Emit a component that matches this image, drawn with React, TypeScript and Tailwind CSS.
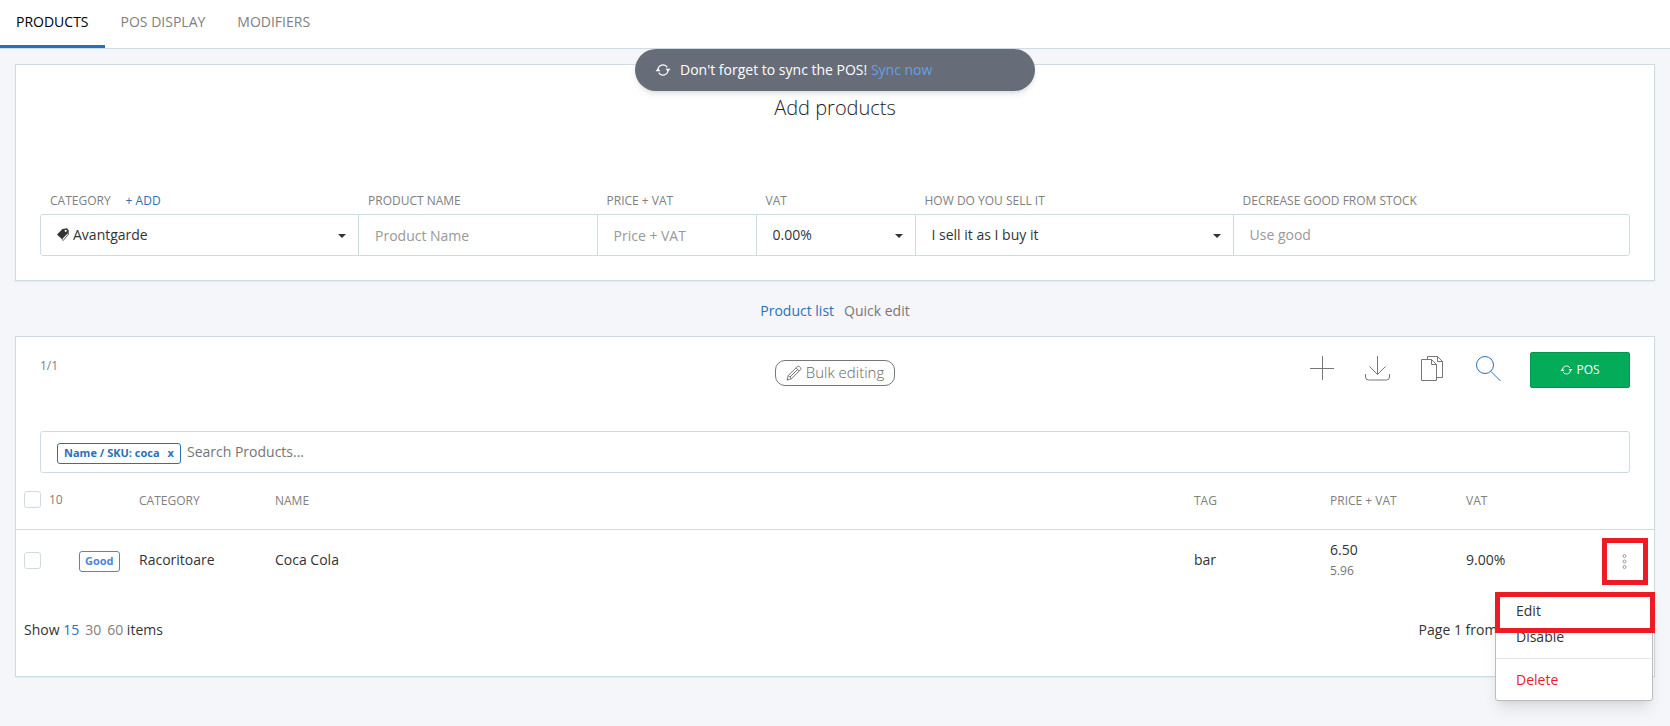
import { useState } from 'react'

function SyncIcon({ className }: { className?: string }) {
  return (
    <svg viewBox="0 0 16 12" fill="none" stroke="currentColor" strokeWidth="1.1" className={className} aria-hidden="true">
      <path d="M3 6a5 5 0 0 1 9.3-2.6M13 6a5 5 0 0 1-9.3 2.6" />
      <path d="M.5 7.2h5L3 4.2zM15.500 4.800h-5L13 7.800z" fill="currentColor" stroke="none" />
    </svg>
  )
}

function TagIcon({ className }: { className?: string }) {
  return (
    <svg viewBox="0 0 12 13" className={className} aria-hidden="true">
      <path d="M5.500 1 10 .2l1 1-.2 4.100L5 11.200 0 6.500z" fill="#333" />
      <circle cx="8.700" cy="2.800" r="1.100" fill="#fff" />
      <path d="M11.600 2v4L6.300 12.400 5 11.500" fill="none" stroke="#333" strokeWidth=".8" />
    </svg>
  )
}

function PencilIcon({ className }: { className?: string }) {
  return (
    <svg viewBox="0 0 16 16" fill="none" stroke="currentColor" strokeWidth=".9" className={className} aria-hidden="true">
      <path d="M1 15 2.300 10.500 11.300 1.500a1.500 1.500 0 0 1 2 0L14.500 2.700a1.500 1.500 0 0 1 0 2L5.500 13.700zM2.300 10.500l3.200 3.200M10 2.800l3.200 3.200M4 12 11.600 4.400" />
    </svg>
  )
}

function Caret() {
  return (
    <svg viewBox="0 0 8 4" className="pointer-events-none absolute right-3 top-[19px] h-1 w-2" aria-hidden="true">
      <path d="M0 0h8L4 4z" fill="#333" />
    </svg>
  )
}

const fieldClass = 'h-10 w-full bg-white px-4 text-sm text-[#333] outline-none placeholder:text-[#999]'
const cellClass = 'relative border-l border-[#cfdbe2]'
const labelClass = 'px-2.5 text-xs text-[#808080]'
const checkboxClass = 'block size-[17px] appearance-none rounded-[3px] border border-[#cfdbe2] bg-white checked:bg-[#2c70b7]'

const tools = [
  {
    name: 'Add',
    color: 'text-[#777]',
    path: 'M12.500 0v24M0 12.500h24',
  },
  {
    name: 'Download',
    color: 'text-[#777]',
    path: 'M12.500 0v18M4.500 10.500l8 8 8-8M.5 18v3a3 3 0 0 0 3 3h18a3 3 0 0 0 3-3v-3',
  },
  {
    name: 'Copy',
    color: 'text-[#777]',
    path: 'M1.500 3.500h10l5 5v16h-15zM11.500 3.500v5h5M7.500 3.500v-3h10l5 5v16h-6M17.500.5v5h5',
  },
  {
    name: 'Search',
    color: 'text-[#2c70b7]',
    path: 'M18.500 9a8.500 8.500 0 1 1-17 0a8.500 8.500 0 0 1 17 0M16 15.500 25.500 25',
  },
]

function AddProducts() {
  return (
    <section className="mx-[15px] mt-[15px] border border-[#cfdbe2] bg-white px-6 pb-6 shadow-xs">
      <h1 className="pt-[29px] text-center text-xl font-light leading-7 text-[#222]">Add products</h1>
      <form className="mt-[71px] grid grid-cols-[20fr_15fr_10fr_10fr_20fr_25fr] gap-y-[5px]" onSubmit={(e) => e.preventDefault()}>
        <div className={labelClass}>
          <label htmlFor="category">CATEGORY</label>
          <a href="#add-category" className="ml-[15px] text-[#2c70b7]">+ ADD</a>
        </div>
        <label htmlFor="product-name" className={labelClass}>PRODUCT NAME</label>
        <label htmlFor="price" className={labelClass}>PRICE + VAT</label>
        <label htmlFor="vat" className={labelClass}>VAT</label>
        <label htmlFor="sell" className={labelClass}>HOW DO YOU SELL IT</label>
        <label htmlFor="stock" className={labelClass}>DECREASE GOOD FROM STOCK</label>
        <div className="col-span-6 grid grid-cols-subgrid rounded-[3px] border border-[#cfdbe2]">
          <div className="relative">
            <TagIcon className="pointer-events-none absolute left-4 top-[13px] h-[13px] w-3" />
            <select id="category" className="h-10 w-full appearance-none rounded-[3px] bg-white pl-8 pr-6 text-sm text-[#333] outline-none">
              <option>Avantgarde</option>
            </select>
            <Caret />
          </div>
          <div className={cellClass}>
            <input id="product-name" placeholder="Product Name" className={fieldClass} />
          </div>
          <div className={cellClass}>
            <input id="price" placeholder="Price + VAT" className={fieldClass} />
          </div>
          <div className={cellClass}>
            <select id="vat" className={`${fieldClass} appearance-none`}>
              <option>0.00%</option>
            </select>
            <Caret />
          </div>
          <div className={cellClass}>
            <select id="sell" className={`${fieldClass} appearance-none`}>
              <option>I sell it as I buy it</option>
            </select>
            <Caret />
          </div>
          <div className={cellClass}>
            <input id="stock" placeholder="Use good" className={`${fieldClass} rounded-[3px] pb-0.5`} />
          </div>
        </div>
      </form>
    </section>
  )
}

function RowMenu() {
  return (
    <div className="absolute -right-px top-[62px] z-10 w-40">
      <ul className="mr-0.5 rounded-b-[3px] border border-[#b9bdc1] bg-white pb-1.5 pt-[5px] text-sm text-[#333] shadow-lg">
        <li><button className="block h-[26px] w-full px-5 text-left">Edit</button></li>
        <li><button className="block h-[26px] w-full px-5 text-left">Disable</button></li>
        <li className="mt-2 border-t border-[#e5e5e5] pt-2">
          <button className="block h-[27px] w-full px-5 text-left text-[#ed1c24]">Delete</button>
        </li>
      </ul>
      <div className="pointer-events-none absolute inset-x-0 top-0 h-[41px] border-[5px] border-[#ed1c24]" />
    </div>
  )
}

function ProductList() {
  const [query, setQuery] = useState('')

  return (
    <section className="mx-[15px] border border-[#cfdbe2] bg-white shadow-xs">
      <div className="grid grid-cols-3 items-start px-6 pt-[15px]">
        <span className="pt-1.5 text-xs text-[#808080]">1/1</span>
        <button className="mt-2 flex h-[26px] items-center gap-1 justify-self-center rounded-[10px] border border-[#777] px-2.5 text-[15px] font-light text-[#666]">
          <PencilIcon className="size-4" />
          Bulk editing
        </button>
        <div className="flex items-center justify-end">
          <div className="mr-[29px] flex gap-[29px] pb-0.5">
            {tools.map((tool) => (
              <button key={tool.name} aria-label={tool.name} className={tool.color}>
                <svg viewBox="0 0 26 26" fill="none" stroke="currentColor" className="size-[26px]">
                  <path d={tool.path} />
                </svg>
              </button>
            ))}
          </div>
          <button className="flex h-9 w-[100px] items-center justify-center gap-[3px] rounded-[2px] border border-[#00964d] bg-[#04ab59] text-xs text-white">
            <SyncIcon className="h-[10px] w-[13px]" />
            POS
          </button>
        </div>
      </div>

      <div className="mx-6 mt-[43px] flex h-[42px] items-center gap-1.5 rounded-[3px] border border-[#cfdbe2] px-4">
        <span className="mt-0.5 flex h-[21px] items-center gap-2 whitespace-nowrap rounded-[3px] border border-[#2c70b7] px-1.5 text-[11px] font-bold text-[#2c70b7]">
          Name / SKU: coca
          <button aria-label="Remove filter">x</button>
        </span>
        <input
          aria-label="Search products"
          value={query}
          onChange={(e) => setQuery(e.target.value)}
          placeholder="Search Products..."
          className="min-w-0 flex-1 text-sm outline-none placeholder:text-[#757575]"
        />
      </div>

      <table className="w-full table-fixed text-left text-sm text-[#333]">
        <thead className="text-xs text-[#808080]">
          <tr className="h-14 border-b border-[#cfdbe2]">
            <th className="w-[115px] pb-0.5 pl-2 font-normal">
              <label className="flex items-center gap-2">
                <input type="checkbox" className={checkboxClass} />
                10
              </label>
            </th>
            <th className="w-[136px] px-2 font-normal">CATEGORY</th>
            <th className="px-2 font-normal">NAME</th>
            <th className="w-[136px] px-2 font-normal">TAG</th>
            <th className="w-[136px] px-2 font-normal">PRICE + VAT</th>
            <th className="w-[136px] px-2 font-normal">VAT</th>
            <th className="w-[60px]" aria-label="Actions" />
          </tr>
        </thead>
        <tbody>
          <tr className="h-[62px]">
            <td className="pl-2">
              <div className="flex items-center gap-[38px]">
                <input type="checkbox" aria-label="Select Coca Cola" className={checkboxClass} />
                <span className="mt-0.5 flex h-[21px] items-center rounded-[3px] border border-[#4a86d8] px-[5px] text-[11px] font-bold text-[#4a86d8]">
                  Good
                </span>
              </div>
            </td>
            <td className="px-2">Racoritoare</td>
            <td className="px-2">Coca Cola</td>
            <td className="px-2">bar</td>
            <td className="px-2">
              <div className="leading-[22px]">6.50</div>
              <div className="text-xs leading-[20px] text-[#777]">5.96</div>
            </td>
            <td className="px-2">9.00%</td>
            <td className="relative pt-[3px]">
              <button aria-label="Row actions" className="ml-2 flex h-[47px] w-[46px] items-center justify-center border-[5px] border-[#ed1c24] pr-0.5">
                <svg viewBox="0 0 5 15" fill="none" stroke="#999" className="h-[15px] w-[5px]">
                  <circle cx="2.500" cy="2" r="1.500" />
                  <circle cx="2.500" cy="7.500" r="1.500" />
                  <circle cx="2.500" cy="13" r="1.500" />
                </svg>
              </button>
              <RowMenu />
            </td>
          </tr>
        </tbody>
      </table>

      <div className="flex justify-between px-2 pb-9 pt-[29px] text-sm text-[#333]">
        <div>
          Show <a href="#15" className="text-[#2c70b7]">15</a>
          <a href="#30" className="mx-1.5 text-[#808080]">30</a>
          <a href="#60" className="text-[#808080]">60</a> items
        </div>
        <div className="pr-[137px]">Page 1 from 1</div>
      </div>
    </section>
  )
}

export default function App() {
  return (
    <div className="relative min-h-screen bg-[#f5f6fa] font-['Open_Sans',sans-serif] text-sm">
      <nav className="flex h-[49px] border-b border-[#cfdbe2] bg-white text-sm text-[#808080]">
        <a href="#products" className="border-b-[3px] border-[#2c70b7] px-4 pt-3 text-black">PRODUCTS</a>
        <a href="#pos-display" className="px-4 pt-3">POS DISPLAY</a>
        <a href="#modifiers" className="px-4 pt-3">MODIFIERS</a>
      </nav>

      <div className="absolute inset-x-0 top-[49px] z-10 mx-auto flex h-[42px] w-[400px] items-center rounded-[21px] bg-[#666d78] px-5 text-white shadow-md">
        <SyncIcon className="mr-[9px] h-3 w-4" />
        <span>
          Don't forget to sync the POS! <a href="#sync" className="text-[#65a0e4]">Sync now</a>
        </span>
      </div>

      <AddProducts />

      <div className="flex h-[55px] items-center justify-center gap-2.5 pt-1">
        <a href="#list" className="text-[#2c70b7]">Product list</a>
        <a href="#quick" className="text-[#777]">Quick edit</a>
      </div>

      <ProductList />
    </div>
  )
}
